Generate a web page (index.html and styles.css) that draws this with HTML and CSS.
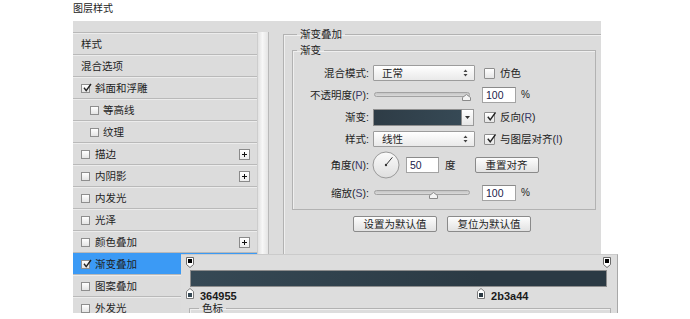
FILE: index.html
```html
<!DOCTYPE html>
<html lang="zh">
<head>
<meta charset="utf-8">
<title>图层样式</title>
<link rel="stylesheet" href="styles.css">
</head>
<body>
<div class="stage">
  <div class="title">图层样式</div>
  <div class="dialog">
    <div class="sidebar">
      <ul class="list">
        <li class="item">样式</li>
        <li class="item">混合选项</li>
        <li class="item"><span class="cb on"><svg viewBox="0 0 10 10"><path d="M2 4.8 L4.2 7.6 L9 1"/></svg></span>斜面和浮雕</li>
        <li class="item sub"><span class="cb"></span>等高线</li>
        <li class="item sub"><span class="cb"></span>纹理</li>
        <li class="item"><span class="cb"></span>描边<span class="plus"></span></li>
        <li class="item"><span class="cb"></span>内阴影<span class="plus"></span></li>
        <li class="item"><span class="cb"></span>内发光</li>
        <li class="item"><span class="cb"></span>光泽</li>
        <li class="item"><span class="cb"></span>颜色叠加<span class="plus"></span></li>
        <li class="item sel"><span class="cb on"><svg viewBox="0 0 10 10"><path d="M2 4.8 L4.2 7.6 L9 1"/></svg></span>渐变叠加</li>
        <li class="item"><span class="cb"></span>图案叠加</li>
        <li class="item"><span class="cb"></span>外发光</li>
      </ul>
      <div class="scroll"></div>
    </div>
    <div class="main">
      <fieldset class="outer">
        <legend>渐变叠加</legend>
        <fieldset class="inner">
          <legend>渐变</legend>
          <div class="row">
            <span class="lab">混合模式:</span>
            <span class="select">正常<svg class="ud" viewBox="0 0 5 8"><path d="M0.5 3 L2.5 0.5 L4.5 3 Z M0.5 5 L2.5 7.5 L4.5 5 Z"/></svg></span>
            <span class="chk"></span><span class="ctext">仿色</span>
          </div>
          <div class="row">
            <span class="lab">不透明度(<i>P</i>):</span>
            <span class="slider"><span class="thumb t-end"><svg viewBox="0 0 9 7"><path d="M0.5 6.5 V3.5 L4.5 0.5 L8.5 3.5 V6.5 Z"/></svg></span></span>
            <span class="field">100</span><span class="unit">%</span>
          </div>
          <div class="row">
            <span class="lab">渐变:</span>
            <span class="grad"></span><span class="dd"><svg viewBox="0 0 5 3"><path d="M0 0 H5 L2.5 3 Z"/></svg></span>
            <span class="chk on"><svg viewBox="0 0 10 10"><path d="M1.8 4.8 L4.2 7.8 L9.5 0.5"/></svg></span><span class="ctext">反向(<i>R</i>)</span>
          </div>
          <div class="row">
            <span class="lab">样式:</span>
            <span class="select">线性<svg class="ud" viewBox="0 0 5 8"><path d="M0.5 3 L2.5 0.5 L4.5 3 Z M0.5 5 L2.5 7.5 L4.5 5 Z"/></svg></span>
            <span class="chk"><svg viewBox="0 0 10 10"><path d="M1.8 4.8 L4.2 7.8 L9.5 0.5"/></svg></span><span class="ctext">与图层对齐(<i>I</i>)</span>
          </div>
          <div class="row tall">
            <span class="lab">角度(<i>N</i>):</span>
            <svg class="dial" viewBox="0 0 28 28">
              <defs><linearGradient id="dg" x1="0" y1="0" x2="0" y2="1"><stop offset="0" stop-color="#fbfbfb"/><stop offset="1" stop-color="#dedede"/></linearGradient></defs>
              <circle cx="14" cy="14" r="13" fill="url(#dg)" stroke="#9a9a9a"/>
              <path d="M14 14 L20.4 6.3" stroke="#333" stroke-width="1"/>
              <circle cx="14" cy="14" r="1.2" fill="#333"/>
            </svg>
            <span class="field f50">50</span><span class="deg">度</span>
            <span class="btn reset">重置对齐</span>
          </div>
          <div class="row scale">
            <span class="lab">缩放(<i>S</i>):</span>
            <span class="slider"><span class="thumb t-mid"><svg viewBox="0 0 9 7"><path d="M0.5 6.5 V3.5 L4.5 0.5 L8.5 3.5 V6.5 Z"/></svg></span></span>
            <span class="field">100</span><span class="unit">%</span>
          </div>
        </fieldset>
        <div class="btns">
          <span class="btn wide">设置为默认值</span>
          <span class="btn wide">复位为默认值</span>
        </div>
      </fieldset>
    </div>
  </div>

  <div class="editor">
    <div class="tops">
      <svg class="tstop ts-l" viewBox="0 0 8 11"><path d="M0.5 0.5 H7.5 V7.5 L4 10.5 L0.5 7.5 Z"/><rect x="2" y="2" width="4" height="4"/></svg>
      <svg class="tstop ts-r" viewBox="0 0 8 11"><path d="M0.5 0.5 H7.5 V7.5 L4 10.5 L0.5 7.5 Z"/><rect x="2" y="2" width="4" height="4"/></svg>
    </div>
    <div class="bar"></div>
    <div class="bottoms">
      <span class="stop" style="left:-4px"><svg viewBox="0 0 8 11"><path d="M0.5 10.5 V3.5 L4 0.5 L7.5 3.5 V10.5 Z"/><rect x="2" y="5" width="4" height="4" fill="#364955"/></svg><b>364955</b></span>
      <span class="stop" style="left:calc(69.8% - 4px)"><svg viewBox="0 0 8 11"><path d="M0.5 10.5 V3.5 L4 0.5 L7.5 3.5 V10.5 Z"/><rect x="2" y="5" width="4" height="4" fill="#2b3a44"/></svg><b>2b3a44</b></span>
    </div>
    <fieldset class="stops">
      <legend>色标</legend>
    </fieldset>
  </div>
</div>
</body>
</html>
```

FILE: styles.css
```css
* { box-sizing: border-box; }
body {
  margin: 0;
  background: #ffffff;
  font-family: "Liberation Sans", "Noto Sans CJK SC", sans-serif;
  color: #1e1e1e;
}
.stage {
  position: relative;
  width: 690px;
  height: 313px;
  overflow: hidden;
}
.title {
  height: 21px;
  padding-left: 73px;
  font-size: 10px;
  line-height: 18px;
  color: #222;
}
.dialog {
  margin-left: 73px;
  width: 528px;
  height: 300px;
  background: #dcdcdc;
  display: flex;
}
.sidebar {
  display: flex;
  margin-top: 11px;
  width: 196px;
  border-right: 1px solid #b9b9b9;
}
.list {
  width: 184px;
  margin: 0;
  padding: 0;
  list-style: none;
  border-top: 1px solid #b8b8b8;
}
.item {
  height: 22px;
  display: flex;
  align-items: center;
  padding-left: 8px;
  padding-right: 7px;
  font-size: 10.5px;
  line-height: 12px;
  color: #1e1e1e;
  border-top: 1px solid #ececec;
  border-bottom: 1px solid #b9b9b9;
  background: #dcdcdc;
}
.item.sub { padding-left: 17px; }
.item.sel { background: #3b9af5; border-top-color: #3b9af5; }
.cb {
  width: 9px;
  height: 9px;
  margin-right: 5px;
  border: 1px solid #8e8e8e;
  background: linear-gradient(#ffffff, #e4e4e4);
  position: relative;
  flex: none;
}
.cb svg, .chk svg {
  position: absolute;
  left: 0;
  top: -2px;
  width: 10px;
  height: 10px;
  fill: none;
  stroke: #222;
  stroke-width: 1.4;
}
.item.sub .cb { margin-right: 4px; }
.plus {
  margin-left: auto;
  width: 11px;
  height: 11px;
  border: 1px solid #8a8a8a;
  background: linear-gradient(#ffffff, #ececec);
  position: relative;
}
.plus::before, .plus::after {
  content: "";
  position: absolute;
  background: #111;
}
.plus::before { left: 2px; top: 4px; width: 5px; height: 1px; }
.plus::after { left: 4px; top: 2px; width: 1px; height: 5px; }
.scroll {
  width: 11px;
  background: linear-gradient(to right, #e2e2e2, #f7f7f7 45%, #e4e4e4);
  border-left: 1px solid #cdcdcd;
}
.main {
  padding-left: 14px;
  padding-top: 6px;
}
fieldset {
  margin: 0;
  border: 1px solid #b2b2b2;
  box-shadow: inset 1px 1px 0 #efefef;
  min-width: 0;
}
legend {
  font-size: 10.5px;
  line-height: 14px;
  padding: 0 3px;
  color: #1e1e1e;
}
.outer {
  width: 318px;
  height: 300px;
  border-right: none;
  border-bottom: none;
  padding: 2px 5px 0 8px;
}
.outer > legend { margin-left: 5px; }
.inner {
  padding: 5px 0 3px 0;
}
.inner > legend { margin-left: 4px; }
.row {
  display: flex;
  align-items: center;
  height: 22px;
  font-size: 10.5px;
  line-height: 12px;
}
.row.tall { height: 30px; }
.row.scale { height: 26px; }
.lab {
  width: 76px;
  margin-right: 4px;
  text-align: right;
  white-space: nowrap;
  color: #1e1e1e;
}
.lab i, .ctext i { font-style: normal; color: #3a3a6a; }
.select {
  width: 102px;
  height: 16px;
  border: 1px solid #9c9c9c;
  border-radius: 1px;
  background: linear-gradient(#ffffff, #e9e9e9);
  display: flex;
  align-items: center;
  padding-left: 8px;
  padding-right: 6px;
}
.ud {
  margin-left: auto;
  width: 5px;
  height: 8px;
  fill: #444;
}
.chk {
  width: 11px;
  height: 11px;
  margin-left: 9px;
  margin-right: 5px;
  border: 1px solid #8e8e8e;
  border-radius: 1px;
  background: linear-gradient(#ffffff, #e6e6e6);
  position: relative;
  flex: none;
}
.chk svg { left: 1px; top: -1px; }
.slider {
  width: 96px;
  height: 5px;
  margin-left: 1px;
  border: 1px solid #a2a2a2;
  border-radius: 3px;
  background: linear-gradient(#c4c4c4, #dadada);
  position: relative;
  top: -1px;
}
.thumb {
  position: absolute;
  top: 1px;
  width: 9px;
  height: 7px;
}
.thumb svg { width: 9px; height: 7px; display: block; fill: #f4f4f4; stroke: #8a8a8a; }
.t-end { left: 87px; }
.t-mid { left: 54px; }
.field {
  width: 34px;
  height: 16px;
  margin-left: 12px;
  border: 1px solid #a3a3a3;
  border-top-color: #8a8a8a;
  background: #ffffff;
  padding-left: 3px;
  font-size: 10.5px;
  line-height: 14px;
  color: #20204a;
}
.unit { margin-left: 5px; font-size: 10px; }
.grad {
  width: 89px;
  height: 17px;
  border: 1px solid #8f8f8f;
  background: linear-gradient(to right, #2e3c46, #364955);
}
.dd {
  width: 12px;
  height: 17px;
  border: 1px solid #9a9a9a;
  border-left: none;
  background: linear-gradient(#ffffff, #e6e6e6);
  display: flex;
  align-items: center;
  justify-content: center;
}
.dd svg { width: 5px; height: 3px; fill: #333; }
.grad + .dd + .chk { margin-left: 10px; }
.dial { width: 28px; height: 28px; margin-left: -1px; }
.f50 { width: 33px; margin-left: 6px; }
.deg { margin-left: 6px; }
.btn {
  height: 16px;
  border: 1px solid #8a8a8a;
  border-radius: 2px;
  background: linear-gradient(#fdfdfd, #e2e2e2);
  display: flex;
  align-items: center;
  justify-content: center;
  font-size: 10.5px;
  line-height: 12px;
  color: #1e1e1e;
}
.reset { width: 64px; margin-left: 19px; }
.btns {
  display: flex;
  justify-content: center;
  gap: 10px;
  margin-top: 6px;
  padding-right: 4px;
}
.wide { width: 84px; }

/* gradient editor overlay */
.editor {
  position: absolute;
  left: 181px;
  top: 254px;
  width: 437px;
  height: 70px;
  background: #dddddd;
  border-top: 1px solid #cbcbcb;
  border-right: 1px solid #a8a8a8;
  padding: 2px 0 0 9px;
}
.tops {
  position: relative;
  width: 417px;
  height: 12px;
}
.tstop {
  position: absolute;
  top: 0;
  width: 8px;
  height: 11px;
  fill: #ffffff;
  stroke: #6a6a6a;
}
.tstop rect { fill: #000; stroke: none; }
.ts-l { left: -4px; }
.ts-r { right: -4px; }
.bar {
  width: 417px;
  height: 17px;
  margin-top: 1px;
  border: 1px solid #8d8d8d;
  background: linear-gradient(to right, #364955 0%, #2b3a44 69.8%, #2b3a44 100%);
}
.bottoms {
  position: relative;
  width: 417px;
  height: 13px;
}
.stop {
  position: absolute;
  top: 1px;
  display: flex;
  align-items: flex-start;
  gap: 6px;
}
.stop svg {
  width: 8px;
  height: 11px;
  fill: #ffffff;
  stroke: #7a7a7a;
  flex: none;
}
.stop svg rect { stroke: none; }
.stop b {
  margin-top: 2px;
  font-size: 11px;
  line-height: 12px;
  font-weight: bold;
  color: #1a1a1a;
}
.stops {
  width: 422px;
  height: 20px;
  margin: 2px 0 0 -1px;
  padding: 0;
  border-color: #b2b2b2;
}
.stops > legend {
  margin-left: 9px;
  line-height: 12px;
}
```
